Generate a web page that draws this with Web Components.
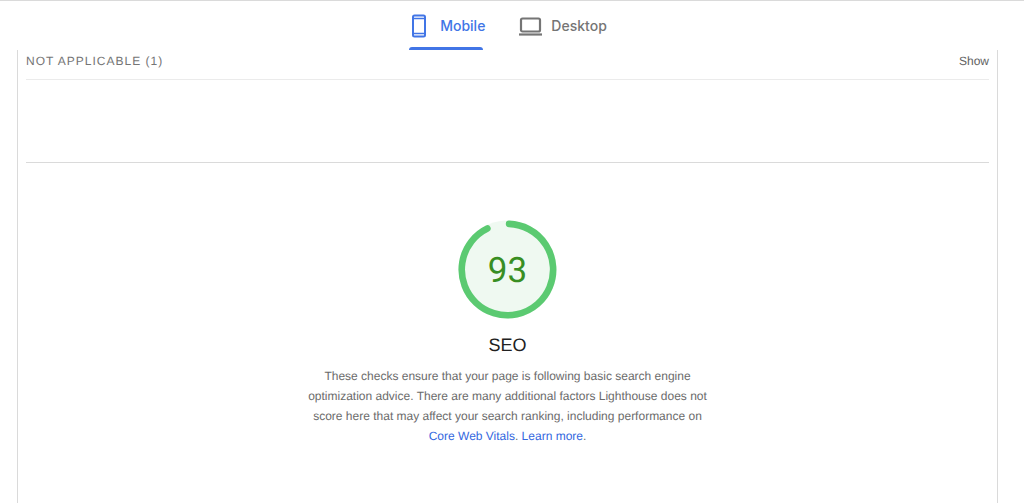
<!DOCTYPE html>
<html lang="en">
<head>
<meta charset="utf-8">
<title>PageSpeed Insights</title>
<meta name="viewport" content="width=device-width, initial-scale=1">
<style>
body { margin: 0; background: #fff; font-family: "Liberation Sans", Arial, sans-serif; color: #757575; text-rendering: geometricPrecision; }
</style>
</head>
<body>
<psi-report></psi-report>
<script>
const define = (name, html, setup) => {
  const template = document.createElement('template');
  template.innerHTML = html;
  customElements.define(name, class extends HTMLElement {
    constructor() {
      super();
      this.attachShadow({ mode: 'open' }).append(template.content.cloneNode(true));
    }
    connectedCallback() { if (setup) setup(this, this.shadowRoot); }
  });
};

define('device-tab', `
<style>
:host { display: block; }
button { position: relative; display: flex; align-items: center; gap: 9px; height: 49px; margin: 0; padding: 0; border: 0; background: none; color: #757575; font: 500 14px/20px Inter, sans-serif; cursor: pointer; }
button[aria-selected="true"] { color: #4175e6; }
button[aria-selected="true"]::after { content: ""; position: absolute; left: 0; right: 2px; bottom: 0; height: 3px; border-radius: 3px 3px 0 0; background: #4175e6; }
::slotted(svg) { display: block; }
</style>
<button type="button" role="tab"><slot name="icon"></slot><slot></slot></button>`,
(host, root) => root.querySelector('button').setAttribute('aria-selected', host.hasAttribute('selected')));

define('device-tabs', `
<style>
:host { display: block; border-top: 1px solid #dadada; }
div { display: flex; justify-content: center; gap: 34px; padding-right: 8px; }
</style>
<div role="tablist" aria-label="Device"><slot></slot></div>`);

define('audit-clump', `
<style>
:host { display: block; }
button { display: flex; justify-content: space-between; align-items: center; width: 100%; height: 30px; margin: 0; padding: 0 0 8px; border: 0; border-bottom: 1px solid #ebebeb; background: none; color: #757575; font: 12px/22px "Liberation Sans", Arial, sans-serif; text-rendering: inherit; cursor: pointer; }
.title { text-transform: uppercase; letter-spacing: 1px; }
.toggle { color: #616161; }
</style>
<button type="button" aria-expanded="false"><span class="title"><slot></slot></span><span class="toggle">Show</span></button>`);

define('score-gauge', `
<style>
:host { display: flex; flex-direction: column; align-items: center; }
.dial { display: grid; width: 99px; height: 99px; place-items: center; }
svg, .score { grid-area: 1 / 1; }
.score { padding-top: 3px; color: #388e22; font: 35px/40px Roboto, sans-serif; }
h2 { margin: 14px 0 0; color: #212121; font-size: 18px; font-weight: 400; line-height: 24px; }
</style>
<div class="dial">
  <svg width="99" height="99" viewBox="0 0 99 99" aria-hidden="true">
    <circle cx="49.5" cy="49.5" r="49" fill="#eff9f1"/>
    <path d="M51.1 3.9A45.7 45.7 0 1 1 29.4 8.5" fill="none" stroke="#5bca71" stroke-width="6.6" stroke-linecap="round"/>
  </svg>
  <span class="score"></span>
</div>
<h2><slot></slot></h2>`,
(host, root) => root.querySelector('.score').textContent = host.getAttribute('score'));

define('report-category', `
<style>
:host { display: block; margin-top: 82px; border-top: 1px solid #dadada; padding: 57px 0 56px; }
p { max-width: 416px; margin: 9px auto 0; text-align: center; font-size: 12px; line-height: 20px; color: #6b6b6b; }
</style>
<slot name="gauge"></slot>
<p><slot></slot></p>`);

define('psi-report', `
<style>
:host { display: flex; flex-direction: column; min-height: 100vh; }
main { flex: 1; margin: 0 26px 0 17px; padding: 0 8px; border: solid #dadada; border-width: 0 1px; }
a { color: #3367e0; text-decoration: none; }
</style>
<device-tabs>
  <device-tab selected>
    <svg slot="icon" width="22" height="24" viewBox="0 0 22 24" fill="none" stroke="currentColor" stroke-width="2" aria-hidden="true"><rect x="4" y="1.5" width="12" height="21" rx="1.5"/><path d="M4 4.5h12M4 19.5h12" stroke-width="1.4"/></svg>
    Mobile
  </device-tab>
  <device-tab>
    <svg slot="icon" width="23" height="24" viewBox="0 0 23 24" fill="none" stroke="currentColor" stroke-width="2" aria-hidden="true"><rect x="2" y="4.5" width="19" height="13" rx="1.5" stroke-width="2.2"/><path d="M0 20.5h23" stroke-width="2.2"/></svg>
    Desktop
  </device-tab>
</device-tabs>
<main>
  <audit-clump>Not applicable (1)</audit-clump>
  <report-category>
    <score-gauge slot="gauge" score="93">SEO</score-gauge>
    These checks ensure that your page is following basic search engine optimization advice. There are many additional factors Lighthouse does not score here that may affect your search ranking, including performance on <a href="#core-web-vitals">Core Web Vitals</a>. <a href="#learn-more">Learn more</a>.
  </report-category>
</main>`);
</script>
</body>
</html>
